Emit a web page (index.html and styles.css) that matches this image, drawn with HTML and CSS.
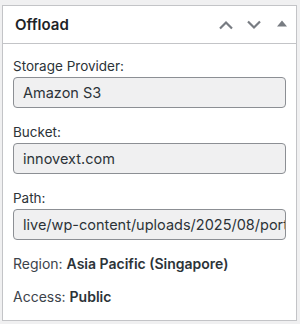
FILE: index.html
```html
<!DOCTYPE html>
<html>
<head>
<meta charset="utf-8">
<link rel="stylesheet" href="styles.css">
</head>
<body>
<div class="postbox">
  <div class="postbox-header">
    <h2 class="title">Offload</h2>
    <div class="actions">
      <svg class="icon" width="16" height="10" viewBox="0 0 16 10"><path d="M2 8.5 L8 2.5 L14 8.5" fill="none" stroke="currentColor" stroke-width="2.2"/></svg>
      <svg class="icon" width="16" height="10" viewBox="0 0 16 10"><path d="M2 1.5 L8 7.5 L14 1.5" fill="none" stroke="currentColor" stroke-width="2.2"/></svg>
      <svg class="icon tri" width="10" height="7" viewBox="0 0 10 7"><path d="M0 6.5 L5 0.5 L10 6.5 Z" fill="currentColor"/></svg>
    </div>
  </div>
  <div class="inside">
    <div class="field">
      <label class="label">Storage Provider:</label>
      <div class="input">Amazon S3</div>
    </div>
    <div class="field">
      <label class="label">Bucket:</label>
      <div class="input">innovext.com</div>
    </div>
    <div class="field">
      <label class="label">Path:</label>
      <div class="input">live/wp-content/uploads/2025/08/portfolio-image.jpg</div>
    </div>
    <p class="meta">Region: <strong>Asia Pacific (Singapore)</strong></p>
    <p class="meta">Access: <strong>Public</strong></p>
  </div>
</div>
</body>
</html>
```
FILE: styles.css
```css
* { box-sizing: border-box; }
body {
  margin: 0;
  background: #f0f0f1;
  font-family: Inter, "Noto Sans", sans-serif;
  color: #1d2327;
}
.postbox {
  margin: 5px 0 0 2px;
  width: 295px;
  height: 316px;
  background: #fff;
  border: 1px solid #c3c4c7;
}
.postbox-header {
  height: 38px;
  border-bottom: 1px solid #c3c4c7;
  display: flex;
  align-items: center;
  justify-content: space-between;
  padding: 0 9px 0 12px;
}
.title {
  margin: 0;
  font-size: 15px;
  font-weight: 600;
  color: #1d2327;
}
.actions {
  display: flex;
  align-items: center;
  gap: 12px;
  color: #787c82;
}
.icon { display: block; }
.tri { margin-left: 3px; margin-top: -2px; }
.inside {
  padding: 13px 10px 0 10px;
}
.field { margin-bottom: 15px; }
.label {
  display: block;
  font-size: 13.5px;
  line-height: 18px;
  color: #2c3338;
  margin-bottom: 2px;
}
.input {
  height: 31px;
  background: #f0f0f1;
  border: 1px solid #8c8f94;
  border-radius: 4px;
  padding: 0 9px;
  font-size: 14.5px;
  line-height: 29px;
  color: #2c3338;
  white-space: nowrap;
  overflow: hidden;
}
.meta {
  margin: 0 0 15px;
  font-size: 14px;
  line-height: 18px;
  color: #3c434a;
}
.meta strong { font-weight: 600; color: #2c3338; }
```
